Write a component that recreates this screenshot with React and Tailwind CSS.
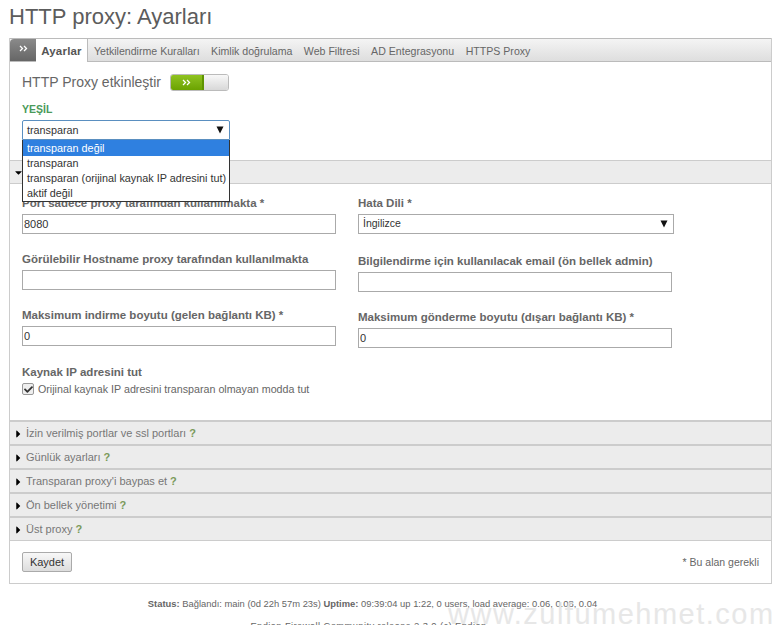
import React from "react";
import { FaCaretRight, FaCaretDown, FaCheck } from "react-icons/fa";

const tabs = ["Yetkilendirme Kuralları", "Kimlik doğrulama", "Web Filtresi", "AD Entegrasyonu", "HTTPS Proxy"];
const sections = ["İzin verilmiş portlar ve ssl portları", "Günlük ayarları", "Transparan proxy'i baypas et", "Ön bellek yönetimi", "Üst proxy"];
const options = ["transparan değil", "transparan", "transparan (orijinal kaynak IP adresini tut)", "aktif değil"];

const Chevrons = () => (
  <svg width="9" height="7" viewBox="0 0 9 7" fill="none" stroke="#fff" strokeWidth="1.3">
    <path d="M1 1l2.5 2.5L1 6M5 1l2.5 2.5L5 6" />
  </svg>
);

const Arrow = () => (
  <svg width="8" height="8" viewBox="0 0 8 8" fill="#111">
    <path d="M0.5 0.5h7L4 7.5z" />
  </svg>
);

const Field = ({ label, value, className = "" }) => (
  <div className={className}>
    <label className="block text-[11.5px] leading-[14px] font-bold text-[#666]">{label}</label>
    <input
      readOnly
      value={value}
      className="mt-[4px] block h-[20px] w-[314px] border border-[#aaa] bg-white px-[1px] text-[11px] text-[#333] outline-none"
    />
  </div>
);

const Section = ({ title }) => (
  <div className="flex h-[24px] items-center border-t-2 border-[#ccc] bg-[#ececec] pl-[4px] pt-[1px] text-[11px] text-[#777]">
    <FaCaretRight className="mr-[3px] w-[9px] text-[12px] text-black" />
    <span>{title}</span>
    <span className="ml-[3px] font-bold text-[#7a9a5a]">?</span>
  </div>
);

export default function App() {
  return (
    <div className="relative h-[625px] w-[778px] overflow-hidden bg-white font-['Liberation_Sans',Arial,sans-serif]">
      <h1 className="h-[38px] pl-[9px] pt-[4px] text-[22px] leading-[26px] text-[#5c5c5c]">HTTP proxy: Ayarları</h1>

      <div className="mx-[9px] w-[763px] border border-[#ccc] border-t-0">
        <div className="flex h-[24px] items-stretch border-y border-[#bbb] bg-gradient-to-b from-[#f4f4f4] to-[#dedede] text-[10.6px] text-[#666]">
          <div className="flex w-[26px] items-center justify-center rounded-tl-[4px] bg-gradient-to-b from-[#8a8a8a] to-[#666] pb-[3px]">
            <Chevrons />
          </div>
          <div className="-mb-px flex w-[52px] items-center justify-center border-r border-[#bbb] bg-white pt-[3px] text-[11.5px] font-bold tracking-[0.2px] text-[#555]">Ayarlar</div>
          <div className="ml-[6px] flex items-center gap-[11.5px] pt-[3px]">
            {tabs.map((tab) => (
              <span key={tab}>{tab}</span>
            ))}
          </div>
        </div>

        <div className="relative h-[98px] px-[12px]">
          <div className="flex items-center pt-[12px]">
            <span className="text-[14px] leading-[17px] text-[#666]">HTTP Proxy etkinleştir</span>
            <div className="ml-[9px] flex h-[17px] w-[59px] overflow-hidden rounded-[3px] border border-[#bbb]">
              <div className="flex w-[33px] items-center justify-center border-r-2 border-[#5f9400] bg-gradient-to-b from-[#8fc31f] to-[#6ba300]">
                <Chevrons />
              </div>
              <div className="flex-1 bg-gradient-to-b from-[#f8f8f8] to-[#d8d8d8]" />
            </div>
          </div>
          <div className="mt-[11px] text-[10.5px] font-bold leading-[14px] text-[#4a9a5a]">YEŞİL</div>
          <div className="absolute left-[12px] top-[58px] z-10 w-[208px] text-[#333]">
            <div className="flex h-[20px] items-center justify-between rounded-t-[2px] border border-[#5a8fc0] bg-white pl-[4px] pr-[5px] text-[10.8px]">
              <span>transparan</span>
              <Arrow />
            </div>
            <ul className="border border-t-0 border-[#333] bg-white text-[10.8px] leading-[15px]">
              {options.map((option, i) => (
                <li key={option} className={i === 0 ? "bg-[#2f80e0] pl-[4px] leading-[16px] text-white" : "pl-[4px]"}>
                  {option}
                </li>
              ))}
            </ul>
          </div>
        </div>

        <div className="flex h-[24px] items-center border-y border-[#ccc] bg-[#ececec] pl-[3px]">
          <FaCaretDown className="text-[11px] text-black" />
        </div>

        <div className="grid h-[236px] grid-cols-[336px_1fr] pl-[12px] pt-[12px]">
          <div>
            <Field label="Port sadece proxy tarafından kullanılmakta *" value="8080" />
            <Field className="mt-[18px]" label="Görülebilir Hostname proxy tarafından kullanılmakta" value="" />
            <Field className="mt-[18px]" label="Maksimum indirme boyutu (gelen bağlantı KB) *" value="0" />
            <div className="mt-[19px] text-[11.5px] font-bold leading-[14px] text-[#666]">Kaynak IP adresini tut</div>
            <div className="mt-[2px] flex items-center text-[10.7px] text-[#666]">
              <span className="mr-[4px] flex h-[12px] w-[12px] items-center justify-center rounded-[2px] border border-[#999] bg-[#eee]">
                <FaCheck className="text-[9px] text-[#333]" />
              </span>
              Orijinal kaynak IP adresini transparan olmayan modda tut
            </div>
          </div>
          <div>
            <label className="block text-[11.5px] font-bold leading-[14px] text-[#666]">Hata Dili *</label>
            <div className="mt-[4px] flex h-[20px] w-[316px] items-center justify-between border border-[#aaa] pl-[4px] pr-[5px] text-[10.5px] text-[#333]">
              <span>İngilizce</span>
              <Arrow />
            </div>
            <Field className="mt-[20px]" label="Bilgilendirme için kullanılacak email (ön bellek admin)" value="" />
            <Field className="mt-[18px]" label="Maksimum gönderme boyutu (dışarı bağlantı KB) *" value="0" />
          </div>
        </div>

        {sections.map((title) => (
          <Section key={title} title={title} />
        ))}

        <div className="flex h-[43px] items-center justify-between border-t border-[#ccc] pl-[12px] pr-[12px]">
          <button className="h-[20px] w-[50px] rounded-[2px] border border-[#aaa] bg-gradient-to-b from-[#f8f8f8] to-[#ddd] text-[11px] text-[#333]">Kaydet</button>
          <span className="pt-[2px] text-[10.5px] text-[#666]">* Bu alan gerekli</span>
        </div>
      </div>

      <div className="mt-[14px] w-[745px] text-center text-[9.4px] leading-[12px] text-[#666]">
        <b>Status:</b> Bağlandı: main (0d 22h 57m 23s) <b>Uptime:</b> 09:39:04 up 1:22, 0 users, load average: 0.06, 0.08, 0.04
      </div>
      <div className="mt-[10px] w-[737px] text-center text-[9.4px] leading-[12px] tracking-[0.4px] text-[#666]">Endian Firewall Community release 2.3.0 (c) Endian</div>

      <div className="pointer-events-none absolute left-[448px] top-[594px] text-[29px] leading-[40px] tracking-[1.5px] text-[#e2e2e2] opacity-80">www.zulfumehmet.com</div>
    </div>
  );
}
